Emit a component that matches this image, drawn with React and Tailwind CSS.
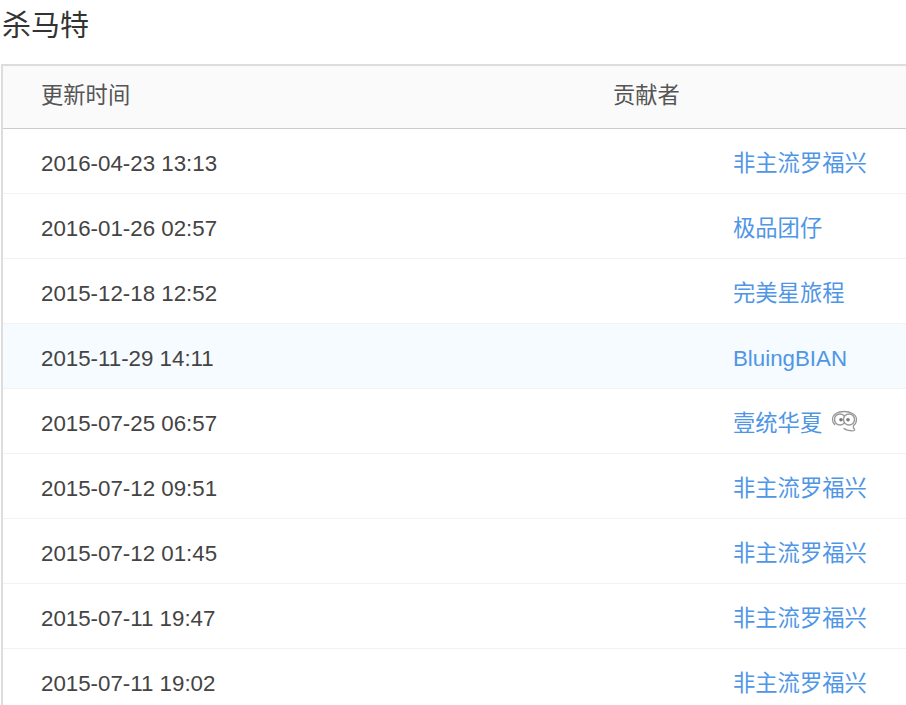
const rows = [
  ["2016-04-23 13:13", "非主流罗福兴", 0],
  ["2016-01-26 02:57", "极品团仔", 0],
  ["2015-12-18 12:52", "完美星旅程", 0],
  ["2015-11-29 14:11", "BluingBIAN", 0, true],
  ["2015-07-25 06:57", "壹统华夏", 1],
  ["2015-07-12 09:51", "非主流罗福兴", 0],
  ["2015-07-12 01:45", "非主流罗福兴", 0],
  ["2015-07-11 19:47", "非主流罗福兴", 0],
  ["2015-07-11 19:02", "非主流罗福兴", 0],
];

function Badge() {
  return (
    <svg width="27" height="24" viewBox="0 0 27 24" fill="none" className="ml-[9px] mb-[3px] shrink-0" stroke="#999">
      <path d="M4 15C2.500 13.500 1.500 11.500 1.500 9.500 1.500 5 6 1.500 13 1.500s12.500 3.500 12.500 8c0 2.500-1 4.500-3 6-.5 1.500 0 2.800 1 3.800.5 1-.5 1.500-2 1.500-4 0-7-1-9-2.500" strokeWidth="1.300" />
      <circle cx="9" cy="9.500" r="5.500" strokeWidth="1.400" fill="#fff" />
      <circle cx="18" cy="9.500" r="5.500" strokeWidth="1.400" fill="#fff" />
      <circle cx="10" cy="9.800" r="1.800" fill="#777" stroke="none" />
      <circle cx="17" cy="9.800" r="1.800" fill="#777" stroke="none" />
    </svg>
  );
}

export default function App() {
  return (
    <div className="h-[705px] w-[906px] overflow-hidden bg-white font-['Liberation_Sans','Noto_Sans_CJK_SC',sans-serif] text-[22.3px] text-[#444]">
      <h1 className="ml-[2px] h-[64px] pt-[7px] text-[29px] font-normal leading-[38px] text-[#333]">杀马特</h1>
      <div className="ml-[1px] w-[920px] border-l-2 border-t-2 border-[#ddd]">
        <div className="flex h-[63px] items-center border-b border-[#ccc] bg-[#fafafa] pb-[3px] pl-[38px]">
          <span className="w-[572px] text-[#555]">更新时间</span>
          <span className="text-[#555]">贡献者</span>
        </div>
        {rows.map(([t, name, badge, hl]) => (
          <div
            key={t + name}
            className={`flex h-[65px] items-center border-b border-[#f2f2f2] pl-[38px] pt-[5px] ${hl ? "bg-[#f5fbff]" : ""}`}
          >
            <span className="w-[692px] shrink-0">{t}</span>
            <span className="text-[#4f96e6]">{name}</span>
            {badge ? <Badge /> : null}
          </div>
        ))}
      </div>
    </div>
  );
}
